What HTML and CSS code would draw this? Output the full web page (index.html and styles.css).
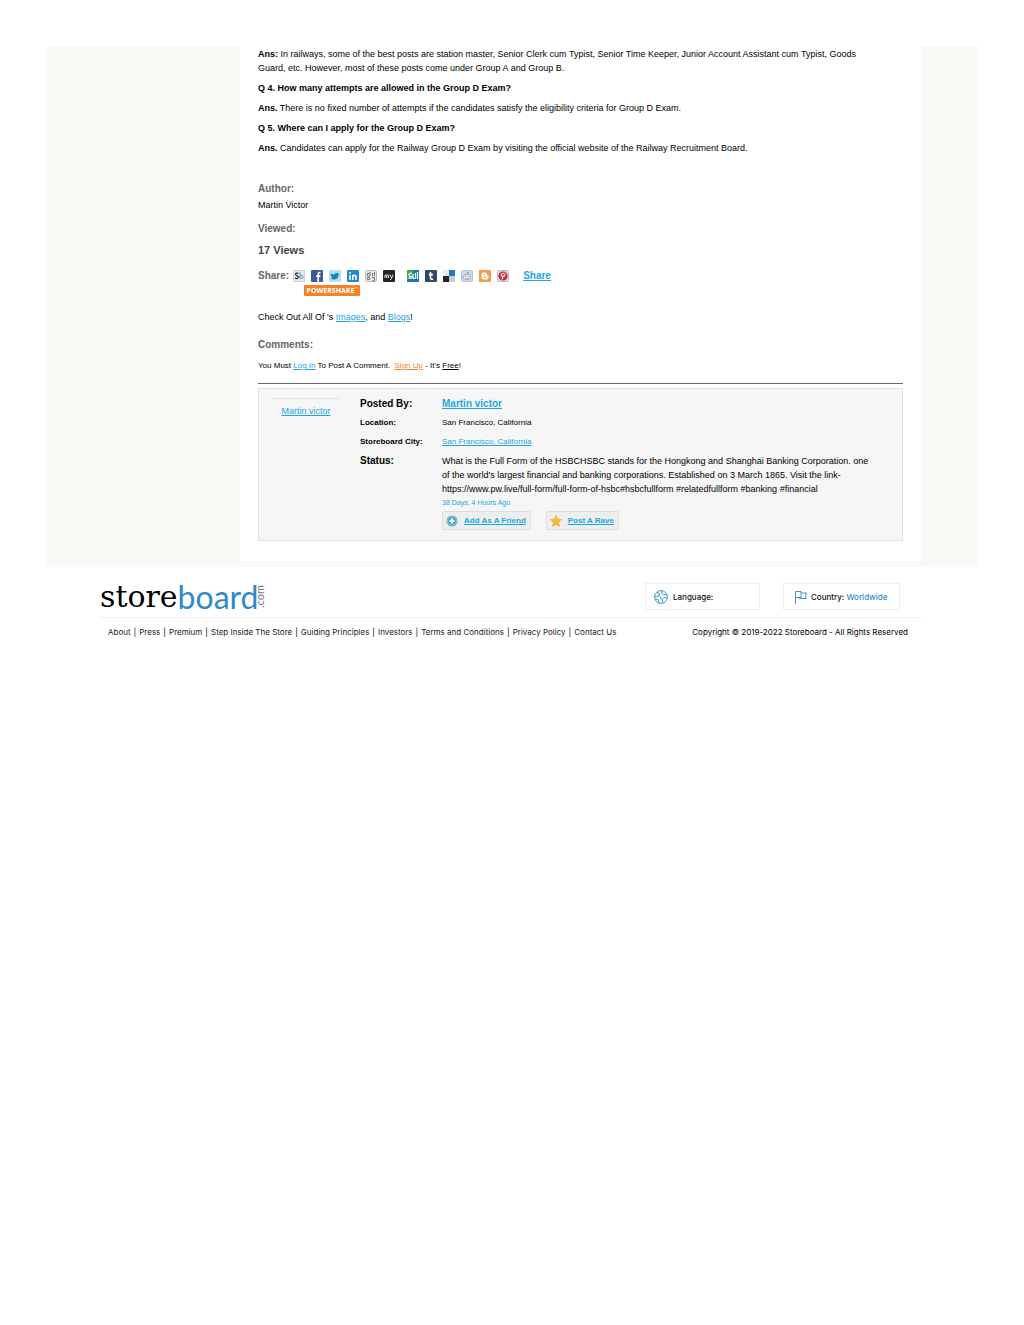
FILE: index.html
```html
<!DOCTYPE html>
<html lang="en">
<head>
    <meta charset="UTF-8">
    <meta name="viewport" content="width=device-width, initial-scale=1.0">
    <title>Storeboard</title>
    <link rel="stylesheet" href="styles.css">
</head>
<body>
    <div class="wrapper">
        <main class="content">
            <div class="article">
                <p><strong>Ans:</strong> In railways, some of the best posts are station master, Senior Clerk cum Typist, Senior Time Keeper, Junior Account Assistant cum Typist, Goods<br>Guard, etc. However, most of these posts come under Group A and Group B.</p>
                <p><strong>Q 4. How many attempts are allowed in the Group D Exam?</strong></p>
                <p><strong>Ans.</strong> There is no fixed number of attempts if the candidates satisfy the eligibility criteria for Group D Exam.</p>
                <p><strong>Q 5. Where can I apply for the Group D Exam?</strong></p>
                <p><strong>Ans.</strong> Candidates can apply for the Railway Group D Exam by visiting the official website of the Railway Recruitment Board.</p>
            </div>

            <h3>Author:</h3>
            <p class="author">Martin Victor</p>
            <h3>Viewed:</h3>
            <p class="views">17 Views</p>

            <!-- Share row -->
            <div class="share">
                <h3>Share:</h3>
                <div class="share-icons">
                    <a href="#" aria-label="Storeboard"><svg viewBox="0 0 12 12"><rect x=".5" y=".5" width="11" height="11" fill="#e8edef" stroke="#cdd3d6"/><path d="M5.3 3.6C4.500 2.800 2.400 3 2.500 4.300C2.600 5.900 5.400 5.400 5.300 7.200C5.200 8.800 2.800 8.900 2 8" fill="none" stroke="#333" stroke-width="1.300"/><path d="M7 2v6.500" stroke="#4a9dbd" stroke-width="1"/><circle cx="8.500" cy="7" r="1.600" fill="none" stroke="#4a9dbd"/></svg></a>
                    <a href="#" aria-label="Facebook"><svg viewBox="0 0 12 12"><rect width="12" height="12" rx="1" fill="#3b5a9b"/><path d="M9.500 2.600H8.400Q7.200 2.600 7.200 4V12M5.300 6.200h4" fill="none" stroke="#fff" stroke-width="1.700"/></svg></a>
                    <a href="#" aria-label="Twitter"><svg viewBox="0 0 12 12"><rect width="12" height="12" rx="1" fill="#b9dff3"/><path d="M1.500 3.500l3.500 1.300Q6 2.500 8 3l2.800 1-1.300 1Q9 9.500 5 9.500 3 9.500 1.500 8.300l2-.5Q2 7 2 5.500z" fill="#1c80bf"/></svg></a>
                    <a href="#" aria-label="LinkedIn"><svg viewBox="0 0 12 12"><rect width="12" height="12" rx="1" fill="#2389c9"/><path d="M3 5v5M5.800 5v5M5.800 7Q6 5.300 7.500 5.300T9 7v3" fill="none" stroke="#fff" stroke-width="1.500"/><circle cx="3" cy="3" r="1" fill="#fff"/></svg></a>
                    <a href="#" aria-label="Digg"><svg viewBox="0 0 12 12"><rect x=".5" y=".5" width="11" height="11" rx="1" fill="#e6e8e9" stroke="#bbb"/><path d="M5 2v4H2.500V3.500H5M7.500 3v3M7 7.500h2.500V11H7M4.500 7.500H2.500v2h2zM9.500 2v4" fill="none" stroke="#777"/></svg></a>
                    <a href="#" aria-label="Myspace"><svg viewBox="0 0 12 12"><rect width="12" height="12" rx="1" fill="#242526"/><path d="M2 8V5.200M2 5.500Q3.500 4 3.700 5.500V8M3.700 5.500Q5.300 4 5.500 5.500V8M7 4.700l1.400 3M10 4.700L8 9.500H7" fill="none" stroke="#fff" stroke-width=".9"/></svg></a>
                    <a href="#" class="second" aria-label="StumbleUpon"><svg viewBox="0 0 12 12"><rect width="12" height="12" rx="1" fill="#47a542"/><path d="M6 0h6v12H0V9h6z" fill="#1679bb"/><path d="M5 3.500Q2 2.500 2 4.500T4.500 7Q4.500 9 1.500 8M6 4v4.500H8.500V3M10.500 2v7" fill="none" stroke="#fff" stroke-width="1.200"/></svg></a>
                    <a href="#" aria-label="Tumblr"><svg viewBox="0 0 12 12"><rect width="12" height="12" rx="1" fill="#34495e"/><path d="M5.500 2v6Q5.500 9.500 8 9.200M4 4.700h4" fill="none" stroke="#fff" stroke-width="1.700"/></svg></a>
                    <a href="#" aria-label="Delicious"><svg viewBox="0 0 12 12"><rect width="12" height="12" fill="#e7ebee"/><path d="M6 0h6v6H6z" fill="#2878bd"/><path d="M0 6h6v6H0z" fill="#20262b"/><path d="M6 6h6v6H6z" fill="#c3ccd3"/></svg></a>
                    <a href="#" aria-label="Reddit"><svg viewBox="0 0 12 12"><rect x=".5" y=".5" width="11" height="11" rx="1" fill="#c5dcf3" stroke="#a9c6e2"/><ellipse cx="6" cy="7" rx="3.700" ry="2.600" fill="#f5f5f5" stroke="#888" stroke-width=".6"/><circle cx="4.500" cy="6.500" r=".8" fill="#e27350"/><circle cx="7.500" cy="6.500" r=".8" fill="#e27350"/><path d="M6 4.500l.5-2 2 .5M4.500 8.300q1.500.8 3 0" fill="none" stroke="#777" stroke-width=".6"/></svg></a>
                    <a href="#" aria-label="Blogger"><svg viewBox="0 0 12 12"><rect width="12" height="12" rx="1" fill="#f49a4b"/><path d="M4.500 2.500h2Q8 2.500 8 5h.5q1 0 1 1v1.500q0 2-2 2h-3q-2 0-2-2v-3q0-2 2-2z" fill="#fff"/><path d="M4.500 4.700h1.700M4.500 7.300h3" stroke="#f49a4b" stroke-width="1"/></svg></a>
                    <a href="#" aria-label="Pinterest"><svg viewBox="0 0 12 12"><rect x=".5" y=".5" width="11" height="11" rx="1" fill="#e5dddd" stroke="#bbb"/><circle cx="6" cy="6" r="4.600" fill="#c9283a"/><path d="M4.300 6.500Q3.300 3.300 6.200 3.200 8.500 3.300 8 5.500 7.200 7.700 5.800 6.700M6.200 5L5 9.500" fill="none" stroke="#fff"/></svg></a>
                </div>
                <a href="#" class="share-link">Share</a>
            </div>
            <button class="powershare">POWERSHARE<sup>™</sup></button>

            <p class="check">Check Out All Of 's <a href="#">Images</a>, and <a href="#">Blogs</a>!</p>
            <h3>Comments:</h3>
            <p class="login">You Must <a href="#">Log In</a> To Post A Comment. &nbsp;<a href="#" class="signup">Sign Up</a> - It's <u>Free</u>!</p>

            <!-- Poster details -->
            <section class="poster">
                <div class="avatar"><a href="#">Martin victor</a></div>
                <table class="details">
                    <tr class="big"><th>Posted By:</th><td><a href="#"><strong>Martin victor</strong></a></td></tr>
                    <tr><th>Location:</th><td>San Francisco, California</td></tr>
                    <tr><th>Storeboard City:</th><td><a href="#">San Francisco, California</a></td></tr>
                    <tr class="big status">
                        <th>Status:</th>
                        <td>
                            <p>What is the Full Form of the HSBCHSBC stands for the Hongkong and Shanghai Banking Corporation. one<br>of the world's largest financial and banking corporations. Established on 3 March 1865. Visit the link-<br>https://www.pw.live/full-form/full-form-of-hsbc#hsbcfullform #relatedfullform #banking #financial</p>
                            <div class="ago">38 Days, 4 Hours Ago</div>
                            <div class="actions">
                                <button class="btn"><svg viewBox="0 0 12 12"><circle cx="6" cy="6" r="5.500" fill="#4ba3c3"/><circle cx="6" cy="6" r="4.500" fill="none" stroke="#9ccfe0"/><path d="M6 3.500v5M3.500 6h5" stroke="#fff" stroke-width="2"/></svg><span>Add As A Friend</span></button>
                                <button class="btn"><svg viewBox="0 0 12 12"><path d="M6 .4l1.600 3.800 4.100.4-3.100 2.700.9 4.200L6 9.300l-3.500 2.200.9-4.200L.3 4.600l4.100-.4z" fill="#f6bd2d" stroke="#dda12b" stroke-width=".5"/></svg><span>Post A Rave</span></button>
                            </div>
                        </td>
                    </tr>
                </table>
            </section>
        </main>
    </div>

    <footer class="footer">
        <div class="footer-top">
            <a href="#" class="logo"><span class="store">store</span><span class="board">board</span><span class="com">.com</span></a>
            <button class="picker language">
                <svg viewBox="0 0 14 14" fill="none" stroke="#3c97c9"><circle cx="7" cy="7" r="6.400"/><path d="M3 2.300l2.500 1L5 5.500 2.500 7 .8 6M8 .9L7.500 3l2 2L13 4.500M13 8l-3-.500-2 2L9 13M1 9l3 .500L5.500 13M5 5.500L8 9.500"/></svg>
                <span>Language:</span>
            </button>
            <button class="picker country">
                <svg viewBox="0 0 14 14" fill="none" stroke="#3c97c9"><path d="M1.500 14V1.500H7v6H1.500M7 3h5.500L11 5.700l1.500 2.800H5.500v-1"/></svg>
                <span>Country: <em>Worldwide</em></span>
            </button>
        </div>
        <div class="footer-bottom">
            <nav>
                <a href="#">About</a><i>|</i>
                <a href="#">Press</a><i>|</i>
                <a href="#">Premium</a><i>|</i>
                <a href="#">Step Inside The Store</a><i>|</i>
                <a href="#">Guiding Principles</a><i>|</i>
                <a href="#">Investors</a><i>|</i>
                <a href="#">Terms and Conditions</a><i>|</i>
                <a href="#">Privacy Policy</a><i>|</i>
                <a href="#">Contact Us</a>
            </nav>
            <p>Copyright © 2019-2022 Storeboard - All Rights Reserved</p>
        </div>
    </footer>
</body>
</html>
```
FILE: styles.css
```css
* {
    margin: 0;
    padding: 0;
    box-sizing: border-box;
}

body {
    background: #fff;
    color: #000;
    font-family: "Liberation Sans", Arial, sans-serif;
    font-size: 9px;
    line-height: 14px;
    padding: 46px 46px 0 47px;
}

a {
    color: #1ba8e0;
}

button {
    font-family: inherit;
    cursor: pointer;
}

svg {
    display: block;
    flex: none;
}

.wrapper {
    background: #faf9f5;
    padding: 0 57px 6px 193px;
}

.content {
    background: #fff;
    padding: 1px 18px 20px;
}

.article {
    margin-bottom: 27px;
}

.article p {
    margin-bottom: 6px;
}

h3 {
    font-size: 10px;
    line-height: 14px;
    color: #666;
}

.author {
    margin: 2px 0 10px;
}

.views {
    font-size: 11px;
    font-weight: bold;
    color: #444;
    margin: 7px 0 12px;
}

.share {
    display: flex;
    align-items: center;
}

.share-icons {
    display: flex;
    gap: 6px;
    margin: 0 14px 0 4px;
}

.share-icons svg {
    width: 12px;
    height: 12px;
}

.share-icons .second {
    margin-left: 6px;
}

.share-link {
    font-size: 10px;
    font-weight: bold;
}

.powershare {
    display: block;
    width: 56px;
    height: 11px;
    margin: 2px 0 0 46px;
    border: 0;
    border-radius: 1px;
    background: #f58227;
    color: #fff;
    font: bold 7px/11px "Open Sans", sans-serif;
}

.powershare sup {
    font-size: 4px;
    line-height: 1px;
}

.check {
    margin: 14px 0;
}

.login {
    font-size: 8px;
    margin-top: 7px;
    padding-bottom: 10px;
    border-bottom: 1px solid #666;
}

.login .signup {
    color: #f58227;
}

.poster {
    display: flex;
    margin-top: 4px;
    padding: 8px 8px 10px 13px;
    background: #f6f6f6;
    border: 1px solid #e2e2e2;
}

.avatar {
    width: 68px;
    margin: 1px 20px 0 0;
    padding-top: 5px;
    border-top: 1px solid #e2e2e2;
    text-align: center;
}

.details {
    flex: 1;
    border-collapse: collapse;
    font-size: 8px;
}

.details th {
    width: 82px;
    text-align: left;
    vertical-align: top;
}

.details th,
.details td {
    height: 19px;
    white-space: nowrap;
}

.details td {
    vertical-align: top;
}

.details .big th,
.details .big strong {
    font-size: 10px;
}

.details .status td {
    font-size: 9px;
}

.details .ago {
    font-size: 7px;
    color: #1ba8e0;
}

.actions {
    display: flex;
    gap: 15px;
    margin-top: 1px;
}

.btn {
    display: flex;
    align-items: center;
    gap: 6px;
    height: 19px;
    padding: 0 4px 0 3px;
    background: #eee;
    border: 1px solid #ddd;
    border-radius: 2px;
    color: #1ba8e0;
    font-size: 8px;
    font-weight: bold;
    text-decoration: underline;
}

.btn svg {
    width: 12px;
    height: 12px;
}

.footer {
    margin: 16px 57px 0 53px;
    font-family: Inter, "Open Sans", sans-serif;
    font-size: 8px;
}

.footer-top {
    display: flex;
    align-items: center;
    padding: 0 21px 7px 0;
    border-bottom: 1px solid #f1f1f1;
}

.logo {
    display: flex;
    align-items: center;
    height: 27px;
    margin-right: auto;
    color: #000;
    text-decoration: none;
    line-height: 27px;
}

.store {
    font-family: "DejaVu Serif", serif;
    font-size: 30px;
}

.board {
    font-family: Lato, sans-serif;
    font-size: 32px;
    color: #2f8ac6;
}

.com {
    writing-mode: vertical-rl;
    transform: rotate(180deg);
    margin-left: -3px;
    font-family: Lato, sans-serif;
    font-size: 11px;
    line-height: 8px;
    color: #777;
}

.picker {
    display: flex;
    align-items: center;
    gap: 5px;
    width: 117px;
    height: 27px;
    margin-left: 23px;
    padding: 0 8px;
    background: #fff;
    border: 1px solid #e8eef1;
    font-size: 8px;
    font-weight: 500;
    color: #111;
}

.picker svg {
    width: 14px;
    height: 14px;
}

.language {
    width: 115px;
}

.country {
    gap: 3px;
    padding-left: 10px;
}

.picker em {
    font-style: normal;
    color: #2f8ac6;
}

.footer-bottom {
    display: flex;
    justify-content: space-between;
    padding: 7px 13px 0 8px;
}

.footer-bottom nav {
    display: flex;
    gap: 3px;
}

.footer-bottom i {
    font-style: normal;
}

.footer-bottom a {
    color: #222;
    text-decoration: none;
}
```
